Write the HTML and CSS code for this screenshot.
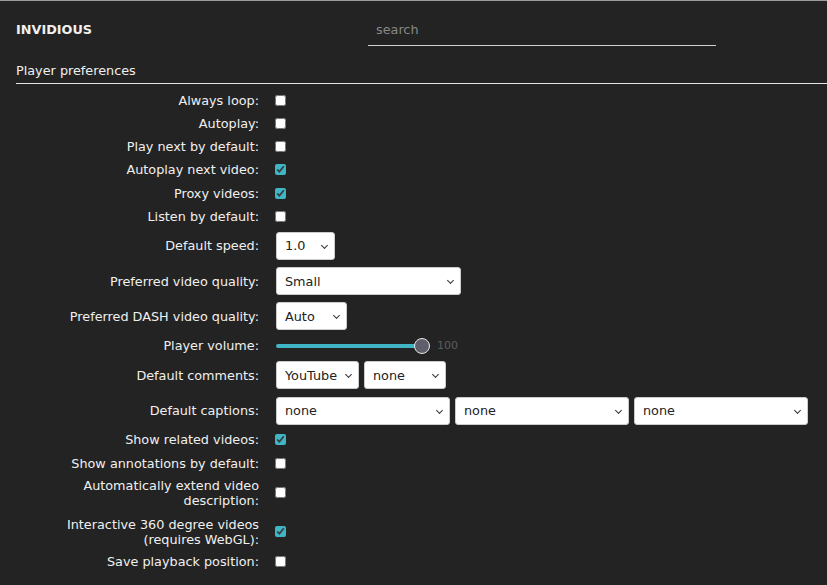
FILE: index.html
```html
<!DOCTYPE html>
<html lang="en">
<head>
  <meta charset="UTF-8">
  <meta name="viewport" content="width=device-width, initial-scale=1.0">
  <title>Preferences - Invidious</title>
  <link rel="stylesheet" href="styles.css">
</head>
<body>
  <div class="navbar">
    <a href="#" class="logo">INVIDIOUS</a>
    <form class="search-form">
      <input type="search" class="search" placeholder="search">
    </form>
  </div>

  <div class="content">
    <form class="prefs">
      <legend class="legend">Player preferences</legend>

      <div class="control-group">
        <label for="always_loop">Always loop: </label>
        <input type="checkbox" id="always_loop">
      </div>
      <div class="control-group">
        <label for="autoplay">Autoplay: </label>
        <input type="checkbox" id="autoplay">
      </div>
      <div class="control-group">
        <label for="continue">Play next by default: </label>
        <input type="checkbox" id="continue">
      </div>
      <div class="control-group">
        <label for="continue_autoplay">Autoplay next video: </label>
        <input type="checkbox" id="continue_autoplay" checked>
      </div>
      <div class="control-group">
        <label for="local">Proxy videos: </label>
        <input type="checkbox" id="local" checked>
      </div>
      <div class="control-group">
        <label for="listen">Listen by default: </label>
        <input type="checkbox" id="listen">
      </div>

      <div class="control-group select-row">
        <label for="speed">Default speed: </label>
        <span class="select-wrap">
          <select id="speed" class="w-speed">
            <option>2.0</option>
            <option>1.75</option>
            <option>1.5</option>
            <option>1.25</option>
            <option selected>1.0</option>
            <option>0.75</option>
            <option>0.5</option>
          </select>
        </span>
      </div>
      <div class="control-group select-row">
        <label for="quality">Preferred video quality: </label>
        <span class="select-wrap">
          <select id="quality" class="w-quality">
            <option>dash</option>
            <option>hd720</option>
            <option>medium</option>
            <option selected>Small</option>
          </select>
        </span>
      </div>
      <div class="control-group select-row">
        <label for="quality_dash">Preferred DASH video quality: </label>
        <span class="select-wrap">
          <select id="quality_dash" class="w-dash">
            <option selected>Auto</option>
            <option>Best</option>
            <option>4320p</option>
            <option>2160p</option>
            <option>1080p</option>
            <option>720p</option>
          </select>
        </span>
      </div>

      <div class="control-group">
        <label for="volume">Player volume: </label>
        <input type="range" id="volume" class="volume" min="0" max="100" step="5" value="100">
        <span class="volume-value">100</span>
      </div>

      <div class="control-group select-row">
        <label for="comments_0">Default comments: </label>
        <div class="selects">
          <span class="select-wrap">
            <select id="comments_0" class="w-comments">
              <option selected>YouTube</option>
              <option>Reddit</option>
              <option>none</option>
            </select>
          </span>
          <span class="select-wrap">
            <select id="comments_1" class="w-comments2">
              <option>YouTube</option>
              <option>Reddit</option>
              <option selected>none</option>
            </select>
          </span>
        </div>
      </div>

      <div class="control-group select-row">
        <label for="captions_0">Default captions: </label>
        <div class="selects">
          <span class="select-wrap">
            <select id="captions_0" class="w-captions">
              <option selected>none</option>
              <option>English</option>
            </select>
          </span>
          <span class="select-wrap">
            <select id="captions_1" class="w-captions">
              <option selected>none</option>
              <option>English</option>
            </select>
          </span>
          <span class="select-wrap">
            <select id="captions_2" class="w-captions">
              <option selected>none</option>
              <option>English</option>
            </select>
          </span>
        </div>
      </div>

      <div class="control-group">
        <label for="related_videos">Show related videos: </label>
        <input type="checkbox" id="related_videos" checked>
      </div>
      <div class="control-group">
        <label for="annotations">Show annotations by default: </label>
        <input type="checkbox" id="annotations">
      </div>
      <div class="control-group">
        <label for="extend_desc">Automatically extend video description: </label>
        <input type="checkbox" id="extend_desc">
      </div>
      <div class="control-group vr-row">
        <label for="vr_mode">Interactive 360 degree videos (requires WebGL): </label>
        <input type="checkbox" id="vr_mode" checked>
      </div>
      <div class="control-group">
        <label for="save_player_pos">Save playback position: </label>
        <input type="checkbox" id="save_player_pos">
      </div>

      <legend class="legend">Visual preferences</legend>
    </form>
  </div>
</body>
</html>
```

FILE: styles.css
```css
* {
  box-sizing: border-box;
}

body {
  margin: 0;
  background: #232323;
  color: #f0f0f0;
  font-family: 'DejaVu Sans', sans-serif;
  font-size: 12.8px;
  border-top: 1px solid #9a9a9a;
}

.navbar {
  display: grid;
  grid-template-columns: 352px 348px;
  align-items: center;
  height: 56px;
  padding-left: 16px;
}

.logo {
  color: #f0f0f0;
  font-weight: bold;
  text-decoration: none;
}

.search {
  display: block;
  width: 100%;
  height: 31px;
  margin-top: 2px;
  padding: 0 8px;
  border: none;
  border-bottom: 1px solid #cfcfcf;
  background: transparent;
  color: #f0f0f0;
  font-family: inherit;
  font-size: 12.8px;
  outline: none;
}

.search::placeholder {
  color: #888;
}

.content {
  padding-left: 16px;
}

.legend {
  display: block;
  width: 100%;
  padding: 6px 0 5px;
  margin-bottom: 8px;
  line-height: 15px;
  border-bottom: 1px solid #e5e5e5;
}

.control-group {
  display: flex;
  align-items: center;
  min-height: 16.8px;
  margin-bottom: 6.4px;
}

.select-row {
  min-height: 29px;
}

.vr-row {
  margin-top: 9px;
}

.control-group label {
  flex-shrink: 0;
  width: 243px;
  margin-right: 17px;
  text-align: right;
  line-height: 15px;
}

input[type="checkbox"] {
  width: 11px;
  height: 11px;
  margin: 0 0 0 -1px;
  accent-color: #3fb5c6;
}

.select-wrap {
  position: relative;
  display: inline-block;
}

.select-wrap::after {
  content: "";
  position: absolute;
  top: 11px;
  right: 8px;
  width: 4px;
  height: 4px;
  border-right: 1px solid #333;
  border-bottom: 1px solid #333;
  transform: rotate(45deg);
  pointer-events: none;
}

select {
  display: block;
  height: 28px;
  padding: 0 18px 0 8px;
  background: #fff;
  color: #222;
  border: 1px solid #ccc;
  border-radius: 3px;
  font-family: inherit;
  font-size: 12.8px;
  -webkit-appearance: none;
  appearance: none;
}

.selects {
  display: flex;
  gap: 5px;
}

.w-speed { width: 59px; }
.w-quality { width: 185px; }
.w-dash { width: 71px; }
.w-comments { width: 83px; }
.w-comments2 { width: 82px; }
.w-captions { width: 174px; }

.volume {
  -webkit-appearance: none;
  appearance: none;
  width: 154px;
  height: 17px;
  margin: 0;
  background: transparent;
}

.volume::-webkit-slider-runnable-track {
  height: 4px;
  background: #3fb5c6;
  border-radius: 2px;
}

.volume::-webkit-slider-thumb {
  -webkit-appearance: none;
  width: 16px;
  height: 16px;
  margin-top: -6px;
  border-radius: 50%;
  background: #5f5f6c;
  border: 1.5px solid #e6e6e6;
}

.volume-value {
  margin-left: 7px;
  color: #5c5c5c;
  font-size: 11px;
}
```
